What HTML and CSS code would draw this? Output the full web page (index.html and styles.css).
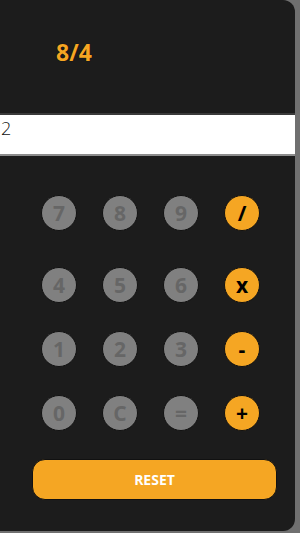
FILE: index.html
```html
<!DOCTYPE html>
<html>
<head>
    <meta name="viewport" content="width=device-width, initial-scale=1.0">
    <title>Calculator</title>
    <link rel="stylesheet" href="styles.css">
</head>
<body>
    <div class="calc">
        <div class="expr">8/4</div>
        <div class="screen">2</div>

        <div class="keys">
            <div class="row">
                <button class="key">7</button>
                <button class="key">8</button>
                <button class="key">9</button>
                <button class="key op">/</button>
            </div>
            <div class="row">
                <button class="key">4</button>
                <button class="key">5</button>
                <button class="key">6</button>
                <button class="key op">x</button>
            </div>
            <div class="row">
                <button class="key">1</button>
                <button class="key">2</button>
                <button class="key">3</button>
                <button class="key op">-</button>
            </div>
            <div class="row">
                <button class="key">0</button>
                <button class="key">C</button>
                <button class="key">=</button>
                <button class="key op">+</button>
            </div>
        </div>

        <button class="reset">RESET</button>
    </div>
</body>
</html>
```

FILE: styles.css
```css
* {
    margin: 0;
    padding: 0;
    box-sizing: border-box;
}
body {
    background-color: #707070;
    font-family: "Open Sans", sans-serif;
}
.calc {
    width: 295px;
    height: 531px;
    background-color: #1c1c1c;
    border-radius: 0 12px 12px 0;
    overflow: hidden;
}
.expr {
    padding: 37px 0 0 56px;
    height: 113px;
    line-height: 30px;
    font-size: 23px;
    font-weight: bold;
    color: #f5a623;
    text-shadow: 0 0 1px #000;
}
.screen {
    height: 43px;
    background-color: #fff;
    border-top: 2px solid #3a3a3a;
    border-bottom: 2px solid #8c8c8c;
    padding: 3px 0 0 1px;
    font-size: 18px;
    font-weight: 300;
    line-height: 20px;
    color: #111;
}
.keys {
    display: flex;
    flex-direction: column;
    gap: 28px;
    padding: 39px 0 0 41px;
}
.row {
    display: flex;
    gap: 25px;
}
.row:first-child {
    margin-bottom: 8px;
}
.key {
    width: 36px;
    height: 36px;
    border-radius: 50%;
    border: 1px solid #111;
    background-color: #808080;
    color: #666;
    font-family: "Open Sans", sans-serif;
    font-size: 21px;
    font-weight: bold;
    line-height: 34px;
}
.key.op {
    background-color: #f5a623;
    color: #000;
}
.reset {
    display: block;
    margin: 28px 0 0 32px;
    width: 245px;
    height: 41px;
    border: 1px solid #111;
    border-radius: 13px;
    background-color: #f5a623;
    color: #fff;
    font-family: "Open Sans", sans-serif;
    font-size: 14px;
    font-weight: bold;
}
```
